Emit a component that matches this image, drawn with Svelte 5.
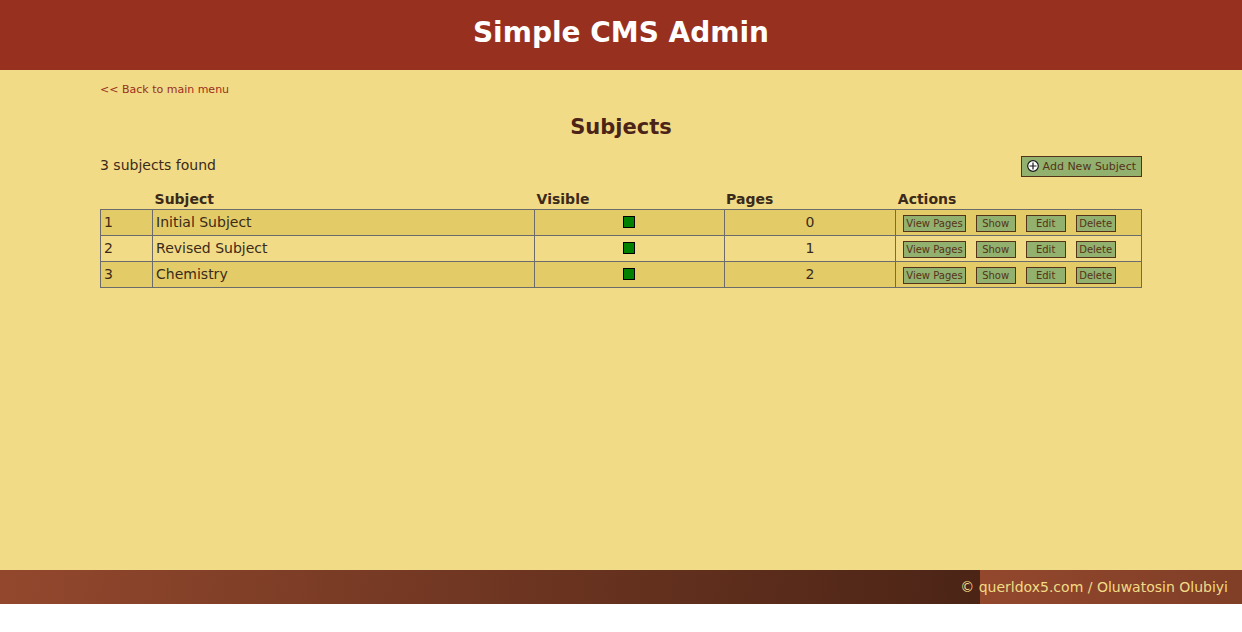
<script>
  const subjects = [
    { position: 1, name: 'Initial Subject', visible: true, pages: 0 },
    { position: 2, name: 'Revised Subject', visible: true, pages: 1 },
    { position: 3, name: 'Chemistry', visible: true, pages: 2 }
  ];
  const actions = ['Show', 'Edit', 'Delete'];
</script>

<header>
  <h1>Simple CMS Admin</h1>
</header>

<main>
  <a class="back" href="#menu">&lt;&lt; Back to main menu</a>
  <h2>Subjects</h2>

  <div class="toolbar">
    <p>{subjects.length} subjects found</p>
    <a class="button add" href="#new">
      <svg width="12" height="12" viewBox="0 0 12 12" aria-hidden="true">
        <circle cx="6" cy="6" r="5.3" fill="#fff" stroke="#1c1c1c" stroke-width="1.2" />
        <path d="M6 2.5v7M2.5 6h7" stroke="#1c1c1c" stroke-width="1.2" />
      </svg>
      <span>Add New Subject</span>
    </a>
  </div>

  <table>
    <colgroup>
      <col class="c-position" />
      <col class="c-subject" />
      <col class="c-visible" />
      <col class="c-pages" />
      <col />
    </colgroup>
    <thead>
      <tr>
        <td></td>
        <th scope="col">Subject</th>
        <th scope="col">Visible</th>
        <th scope="col">Pages</th>
        <th scope="col">Actions</th>
      </tr>
    </thead>
    <tbody>
      {#each subjects as subject (subject.position)}
        <tr>
          <td>{subject.position}</td>
          <td>{subject.name}</td>
          <td class="center"><span class="status" class:on={subject.visible}></span></td>
          <td class="center">{subject.pages}</td>
          <td class="actions">
            <div class="row">
              <a class="button small" href="#pages-{subject.position}">View Pages</a>
              {#each actions as action}
                <a class="button small fixed" href="#{action}-{subject.position}">{action}</a>
              {/each}
            </div>
          </td>
        </tr>
      {/each}
    </tbody>
  </table>
</main>

<footer>© querldox5.com / Oluwatosin Olubiyi</footer>

<style>
  :global(body) {
    margin: 0;
    background: #fff;
    color: #3b2a1a;
    font: 14px/18px Verdana, "DejaVu Sans", sans-serif;
  }

  a {
    text-decoration: none;
  }

  header {
    padding: 15px 0 19px;
    background: #983020;
    color: #fff;
    text-align: center;
  }

  h1 {
    margin: 0;
    font-size: 28px;
    line-height: 36px;
  }

  main {
    box-sizing: border-box;
    min-height: 500px;
    padding: 10px 100px;
    background: #f1db86;
  }

  .back {
    display: block;
    color: #983020;
    font-size: 11px;
    line-height: 20px;
  }

  h2 {
    margin: 14px 0 16px;
    color: #4c2417;
    font-size: 21px;
    line-height: 26px;
    text-align: center;
  }

  .toolbar {
    display: flex;
    justify-content: space-between;
    align-items: flex-start;
    margin-bottom: 12px;
  }

  .toolbar p {
    margin: 0;
  }

  .button {
    box-sizing: border-box;
    border: 1px solid #553318;
    background: #92b06e;
    color: #553318;
  }

  .add {
    display: flex;
    gap: 4px;
    height: 21px;
    padding: 0 5px;
    font-size: 11px;
    line-height: 20px;
  }

  .add svg {
    margin-top: 3px;
  }

  .small {
    height: 17px;
    padding: 0 2px;
    font-size: 10px;
    line-height: 16px;
    text-align: center;
  }

  .fixed {
    width: 40px;
  }

  table {
    width: 100%;
    table-layout: fixed;
    border-collapse: collapse;
  }

  .c-position {
    width: 5%;
  }

  .c-subject {
    width: 36.7%;
  }

  .c-visible {
    width: 18.2%;
  }

  .c-pages {
    width: 16.5%;
  }

  th {
    padding: 1px 2px;
    text-align: left;
  }

  tbody td {
    height: 23px;
    padding: 0 3px 2px;
    border: 1px solid #6b6b6b;
  }

  tbody tr:nth-child(odd) {
    background: #e3cc67;
  }

  .center {
    text-align: center;
  }

  .status {
    display: block;
    box-sizing: border-box;
    width: 12px;
    height: 12px;
    margin: 0 auto;
    border: 1px solid #000;
  }

  .status.on {
    background: #008000;
  }

  tbody .actions {
    padding: 2px 7px 0;
  }

  .row {
    display: flex;
    gap: 10px;
  }

  footer {
    padding: 8px 14px;
    background: linear-gradient(95deg, #93482d, #4b2416) 0 0 / 980px 100% repeat-x;
    color: #f1db86;
    text-align: right;
  }
</style>
